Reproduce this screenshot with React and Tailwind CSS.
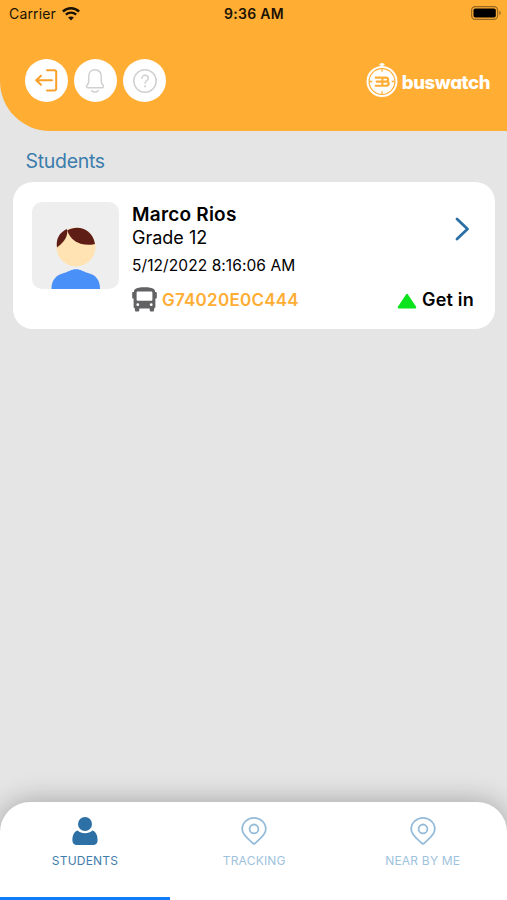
import React, { useState } from 'react';

const ExitIcon = () => (
  <svg className="w-6 h-7 -mt-px text-[#f9a02c]" viewBox="0 0 24 28" fill="none" stroke="currentColor" strokeWidth="2" strokeLinecap="round" strokeLinejoin="round">
    <path d="M12 4.200h7.400a1.800 1.800 0 0 1 1.800 1.800v16.700a1.800 1.800 0 0 1-1.800 1.800H12" />
    <path d="M17 14.300H1.400M6 9.800 1.200 14.300 6 18.800" />
  </svg>
);

const BellIcon = () => (
  <svg className="w-6 h-6 -ml-px text-[#d0d0d3]" viewBox="0 0 24 24" fill="none" stroke="currentColor" strokeWidth="1.5" strokeLinecap="round" strokeLinejoin="round">
    <path d="M12 .8c-3.800 0-6.300 2.700-6.300 6.600v5.200c0 1.600-.7 2.500-1.700 3.600-.9 1.100-.5 2.600 1 2.600h14c1.500 0 1.900-1.500 1-2.600-1-1.100-1.700-2-1.700-3.600V7.400C18.300 3.500 15.800.8 12 .8z" />
    <path d="M8.800 21.600c.9 1.900 5.500 1.900 6.400 0" />
  </svg>
);

const HelpIcon = () => (
  <svg className="w-6 h-6 text-[#d0d0d3]" viewBox="0 0 24 24" fill="none" stroke="currentColor" strokeWidth="1.5" strokeLinecap="round" strokeLinejoin="round">
    <circle cx="12" cy="12" r="11.200" />
    <path d="M9 9.200c0-4 6.200-3.700 6.200 0 0 2.400-3.100 2.600-3.100 5" />
    <path d="M12.100 17.300v.1" strokeWidth="1.900" />
  </svg>
);

const LogoIcon = () => (
  <svg className="w-8 h-[35px]" viewBox="0 0 32 35" fill="none">
    <path d="M14.500 1.500h3M16 1v3" stroke="#fff" strokeWidth="2.200" strokeLinecap="round" />
    <circle cx="16" cy="18.500" r="14.500" stroke="#fff" strokeWidth="2" />
    <circle cx="16" cy="18.500" r="12.300" fill="#fff" />
    <path d="M16 6.200v2.600M16 28.200v2.600M3.700 18.500h2.600M25.700 18.500h2.600" stroke="#ffad33" strokeWidth="1.300" />
    <path d="M9.600 14.600h9.900c3.600 0 3.600 3.900.4 3.900 3.900 0 3.900 4.300-.4 4.300H9.600M10.600 18.600h10M16.400 14.600v8.200" stroke="#ffad33" strokeWidth="2.100" strokeLinejoin="round" strokeLinecap="round" />
  </svg>
);

const WifiIcon = () => (
  <svg className="w-[18px] h-[14px] -mt-px" viewBox="0 0 18 14" fill="none" stroke="#1a1204">
    <path d="M.9 4.500C5.500.2 12.500.2 17.100 4.500" strokeWidth="2.400" />
    <path d="M3.800 7.600C6.700 4.900 11.300 4.900 14.200 7.600" strokeWidth="2.300" />
    <path d="M9 13.500 6.100 10.500C7.700 9 10.300 9 11.900 10.500z" fill="#1a1204" stroke="none" />
  </svg>
);

const BatteryIcon = () => (
  <svg className="w-[31px] h-[14px]" viewBox="0 0 31 14">
    <rect x=".6" y=".6" width="26" height="12.800" rx="3.600" fill="none" stroke="#99691f" strokeWidth="1.200" />
    <rect x="2.500" y="2.500" width="22.300" height="9" rx="1.800" fill="#000" />
    <path d="M28.300 4.800v4.400c1.900-.7 1.900-3.700 0-4.400z" fill="#99691f" />
  </svg>
);

const Avatar = () => (
  <svg className="w-[87px] h-[87px] rounded-[10px] bg-[#eeeeee]" viewBox="0 0 87 87">
    <path d="M19.500 87c0-9 4.500-14 12.500-16 5-1.200 7-3.700 12-3.700s7 2.500 12 3.700c8 2 12 7 12 16z" fill="#4990f8" />
    <circle cx="44" cy="45" r="19.500" fill="#ffe3b3" />
    <path d="M25 45.500c-1.500-9 3-15.500 10-18.500 1 6-1 11.500-10 18.500z" fill="#5f1e15" />
    <path d="M35.200 28.500c10-6 25-2.500 27.800 13.500-12 3-24-2-27.800-13.500z" fill="#5f1e15" />
  </svg>
);

const BusIcon = () => (
  <svg className="w-[25px] h-[25px]" viewBox="0 0 25 25">
    <path fill="#626265" fillRule="evenodd" d="M12.500.2C8 .2 4.800.8 3.300 2 2.300 2.800 2 3.700 1.900 5H1.300C.6 5 .2 5.400.2 6v4.600c0 .6.400 1 1.100 1h.3v8c0 1 .5 1.600 1.300 1.800V23c0 .9.600 1.600 1.500 1.600h1.400c.9 0 1.500-.7 1.500-1.600v-1.400h10.400V23c0 .9.600 1.600 1.500 1.600h1.400c.9 0 1.500-.7 1.500-1.600v-1.600c.8-.2 1.300-.8 1.300-1.800v-8h.3c.7 0 1.100-.4 1.100-1V6c0-.6-.4-1-1.100-1h-.6c-.1-1.300-.4-2.200-1.400-3C20.200.8 17 .2 12.500.2zM6 4.500h13c.9 0 1.400.5 1.400 1.400v6.500c0 .9-.5 1.400-1.400 1.400H6c-.9 0-1.400-.5-1.400-1.400V5.900c0-.9.500-1.400 1.400-1.400zM5.800 16.300a1.400 1.400 0 1 1 0 2.800 1.400 1.400 0 0 1 0-2.800zm13.400 0a1.400 1.400 0 1 1 0 2.800 1.400 1.400 0 0 1 0-2.800z" />
  </svg>
);

const UserIcon = () => (
  <svg className="w-[26px] h-7" viewBox="0 0 26 28" fill="currentColor">
    <circle cx="13" cy="7" r="7" />
    <path d="M5.600 13.600c2 1.800 4.500 2.700 7.400 2.700s5.400-.9 7.400-2.700c3.500 1.200 5.200 4.600 5.200 9.600 0 3.200-1.600 4.800-4.600 4.800H5c-3 0-4.600-1.600-4.600-4.800 0-5 1.700-8.400 5.200-9.600z" />
  </svg>
);

const PinIcon = () => (
  <svg className="w-[26px] h-7" viewBox="0 0 26 28" fill="none" stroke="currentColor" strokeWidth="1.800" strokeLinejoin="round">
    <path d="M12.200 26.500C8 22.500 1.200 18 1.200 12.200a11.800 11.300 0 0 1 23.600 0C24.800 18 18 22.500 13.800 26.500c-.5.500-1.100.5-1.600 0z" />
    <circle cx="13" cy="11.900" r="4.400" />
  </svg>
);

const tabs = [
  { name: 'STUDENTS', icon: <UserIcon /> },
  { name: 'TRACKING', icon: <PinIcon /> },
  { name: 'NEAR BY ME', icon: <PinIcon /> },
];

const App = () => {
  const [active, setActive] = useState('STUDENTS');

  return (
    <div className="w-full h-screen flex flex-col overflow-hidden bg-[#e5e5e5] font-['Inter',sans-serif] text-black">
      {/* Header */}
      <header className="h-[131px] shrink-0 bg-[#ffad33] rounded-bl-[50px]">
        <div className="h-7 pl-[9px] pr-[5px] grid grid-cols-3 items-center text-[#1a1204]">
          <div className="flex items-center gap-[6px]">
            <span className="text-[14px] leading-none tracking-[0.15px]">Carrier</span>
            <WifiIcon />
          </div>
          <span className="text-center text-[14px] leading-none font-semibold tracking-[0.3px] pr-[3px]">9:36 AM</span>
          <div className="flex justify-end -mt-[2px]">
            <BatteryIcon />
          </div>
        </div>

        <div className="mt-[31px] pl-[25px] pr-[17px] flex items-center justify-between">
          <div className="flex gap-[6px]">
            <button className="w-[43px] h-[43px] rounded-full bg-white flex items-center justify-center"><ExitIcon /></button>
            <button className="w-[43px] h-[43px] rounded-full bg-white flex items-center justify-center"><BellIcon /></button>
            <button className="w-[43px] h-[43px] rounded-full bg-white flex items-center justify-center"><HelpIcon /></button>
          </div>
          <div className="flex items-center gap-1 text-white">
            <LogoIcon />
            <span className="text-[18.5px] leading-none font-extrabold tracking-[-0.4px] whitespace-nowrap mt-1 [font-feature-settings:'cv11']">buswatch</span>
          </div>
        </div>
      </header>

      <main className="flex-1 pl-[13px] pr-3">
        <h2 className="mt-[18px] ml-[12.5px] text-[19.5px] leading-6 tracking-[-0.3px] text-[#3c7dac]">Students</h2>

        <div className="mt-[9px] h-[147px] bg-white rounded-[20px] pl-[19px] pr-[21px] pt-5 flex">
          <Avatar />
          <div className="flex-1 ml-[13px]">
            <div className="flex justify-between">
              <div className="pt-px whitespace-nowrap">
                <p className="text-[19px] leading-[23px] font-semibold tracking-[0.22px]">Marco Rios</p>
                <p className="text-[18px] leading-[23px]">Grade 12</p>
                <p className="mt-[7px] text-[15.5px] leading-5 tracking-[0.08px]">5/12/2022 8:16:06 AM</p>
              </div>
              <svg className="w-4 h-6 mt-[15px] mr-1 text-[#2c70a5]" viewBox="0 0 16 24" fill="none" stroke="currentColor" strokeWidth="2.800" strokeLinecap="round" strokeLinejoin="round">
                <path d="M3 2 13.500 12 3 22" />
              </svg>
            </div>
            <div className="mt-[11px] flex items-center justify-between whitespace-nowrap">
              <div className="flex items-center gap-[5px]">
                <BusIcon />
                <span className="text-[17px] leading-5 font-semibold tracking-[0.25px] text-[#ffad33]">G74020E0C444</span>
              </div>
              <div className="flex items-center gap-[5px]">
                <svg className="w-5 h-4 mt-[2px]" viewBox="0 0 20 16">
                  <path d="M10 1.800 18.300 14.400H1.700z" fill="#0be31c" stroke="#0be31c" strokeWidth="2" strokeLinejoin="round" />
                </svg>
                <span className="text-[18px] leading-5 font-semibold tracking-[0.2px]">Get in</span>
              </div>
            </div>
          </div>
        </div>
      </main>

      {/* Bottom tabs */}
      <nav className="h-[98px] shrink-0 bg-white rounded-t-[30px] shadow-[0_0_28px_rgba(0,0,0,0.3)] grid grid-cols-[170px_1fr_1fr] overflow-hidden">
        {tabs.map(tab => (
          <button
            key={tab.name}
            onClick={() => setActive(tab.name)}
            className={`pt-[15px] flex flex-col items-center border-b-[3px] ${
              active === tab.name ? 'text-[#2c70a5] border-[#0f7dfa]' : 'text-[#94bcda] border-transparent'
            }`}
          >
            {tab.icon}
            <span className="mt-2 text-[12px] leading-4 tracking-[0.2px] whitespace-nowrap opacity-90">{tab.name}</span>
          </button>
        ))}
      </nav>
    </div>
  );
};

export default App;
